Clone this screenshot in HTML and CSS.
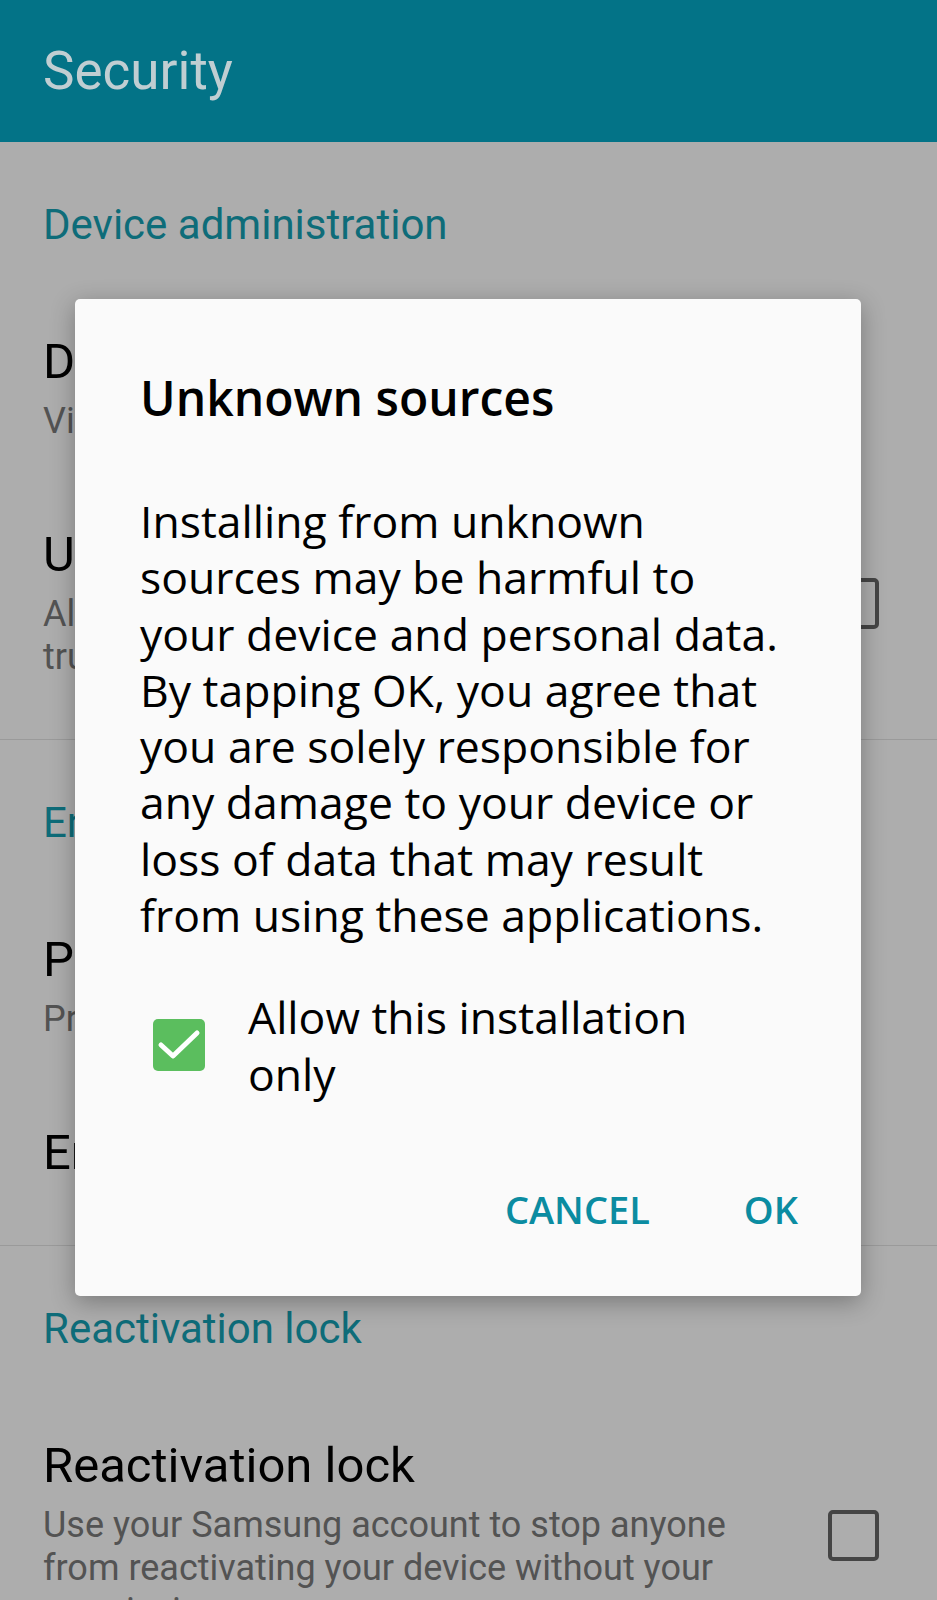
FILE: index.html
```html
<!DOCTYPE html>
<html lang="en">
<head>
    <meta charset="UTF-8">
    <meta name="viewport" content="width=device-width, initial-scale=1.0">
    <title>Security</title>
    <link rel="stylesheet" href="styles.css">
</head>
<body>

    <div class="app-bar">
        <h1>Security</h1>
    </div>

    <div class="settings">
        <div class="section">
            <h2 class="section-label">Device administration</h2>
            <div class="item">
                <div class="item-text">
                    <div class="item-title">Device administrators</div>
                    <div class="item-summary">View or disable device administrators.</div>
                </div>
            </div>
            <div class="item">
                <div class="item-text">
                    <div class="item-title">Unknown sources</div>
                    <div class="item-summary">Allow installation of apps from sources not trusted by Samsung.</div>
                </div>
                <span class="box"></span>
            </div>
        </div>

        <div class="section">
            <h2 class="section-label">Encryption</h2>
            <div class="item">
                <div class="item-text">
                    <div class="item-title">Protect encrypted data</div>
                    <div class="item-summary">Protect your encrypted device data.</div>
                </div>
            </div>
            <div class="item single">
                <div class="item-text">
                    <div class="item-title">Encrypt SD card</div>
                </div>
            </div>
        </div>

        <div class="section">
            <h2 class="section-label">Reactivation lock</h2>
            <div class="item">
                <div class="item-text">
                    <div class="item-title">Reactivation lock</div>
                    <div class="item-summary">Use your Samsung account to stop anyone from reactivating your device without your permission.</div>
                </div>
                <span class="box"></span>
            </div>
        </div>
    </div>

    <!-- Unknown sources dialog -->
    <div class="dialog">
        <h3 class="dialog-title">Unknown sources</h3>
        <p class="dialog-body">Installing from unknown sources may be harmful to your device and personal data. By tapping OK, you agree that you are solely responsible for any damage to your device or loss of data that may result from using these applications.</p>
        <div class="dialog-check">
            <span class="check">
                <svg width="52" height="52" viewBox="0 0 52 52">
                    <polyline points="8,26 20,37 44,14" fill="none" stroke="#ffffff" stroke-width="5" stroke-linecap="round" stroke-linejoin="round"/>
                </svg>
            </span>
            <span class="check-label">Allow this installation only</span>
        </div>
        <div class="dialog-buttons">
            <button>CANCEL</button>
            <button>OK</button>
        </div>
    </div>

</body>
</html>
```

FILE: styles.css
```css
body {
    margin: 0;
    width: 937px;
    height: 1600px;
    overflow: hidden;
    position: relative;
    font-family: Roboto, "Liberation Sans", sans-serif;
    background-color: #adadad;
}
.app-bar {
    height: 142px;
    display: flex;
    align-items: center;
    padding: 0 43px;
    background-color: #037387;
}
.app-bar h1 {
    margin: 0;
    font-size: 53px;
    font-weight: 400;
    color: #c0ced2;
}
.section {
    border-top: 1px solid #9a9a9a;
}
.section:first-child {
    border-top: none;
}
.section-label {
    margin: 0;
    padding: 58px 43px 60px;
    font-size: 42px;
    line-height: 50px;
    font-weight: 400;
    color: #0e6c79;
}
.item {
    display: flex;
    align-items: center;
    gap: 60px;
    padding: 24px 58px 60px 43px;
}
.item.single {
    padding-bottom: 64px;
}
.item-text {
    flex: 1;
}
.item-title {
    font-size: 49px;
    line-height: 56px;
    color: #000;
}
.item-summary {
    margin-top: 10px;
    font-size: 36px;
    line-height: 43px;
    color: #535353;
}
.box {
    flex: none;
    width: 43px;
    height: 43px;
    border: 4px solid #454545;
    border-radius: 5px;
}

.dialog {
    position: absolute;
    left: 75px;
    top: 299px;
    width: 786px;
    box-sizing: border-box;
    padding: 67px 63px 63px 65px;
    background-color: #fafafa;
    border-radius: 5px;
    box-shadow: 0 6px 24px rgba(0, 0, 0, 0.3);
    font-family: "Open Sans", sans-serif;
    color: #000;
}
.dialog-title {
    margin: 0;
    font-size: 48px;
    line-height: 64px;
    font-weight: 600;
}
.dialog-body {
    margin: 63px 0 0;
    font-size: 44.5px;
    line-height: 56.3px;
}
.dialog-check {
    display: flex;
    align-items: center;
    gap: 43px;
    margin-top: 45px;
    padding-left: 13px;
    font-size: 44.5px;
    line-height: 57px;
}
.check {
    flex: none;
    width: 52px;
    height: 52px;
    border-radius: 5px;
    background-color: #5bbe5e;
}
.check svg {
    display: block;
}
.check-label {
    max-width: 470px;
}
.dialog-buttons {
    display: flex;
    justify-content: flex-end;
    gap: 94px;
    margin-top: 83px;
}
.dialog-buttons button {
    padding: 0;
    border: none;
    background: none;
    font-family: "Open Sans", sans-serif;
    font-size: 38px;
    font-weight: 600;
    line-height: 48px;
    color: #0b8ca1;
    cursor: pointer;
}
```
